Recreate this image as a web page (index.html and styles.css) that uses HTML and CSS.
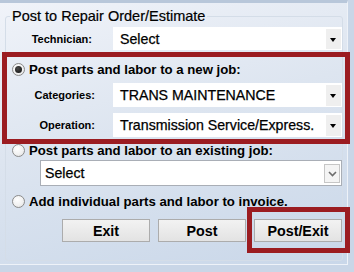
FILE: index.html
```html
<!DOCTYPE html>
<html>
<head>
<meta charset="utf-8">
<link rel="stylesheet" href="styles.css">
</head>
<body>
<div class="window">
  <fieldset class="group">
    <legend class="legend">Post to Repair Order/Estimate</legend>
    <div class="row tech-row">
      <span class="lbl tech-lbl">Technician:</span>
      <div class="combo flat"><span class="val">Select</span><span class="arrow"></span></div>
    </div>
    <div class="hl-box">
      <label class="radio r1"><span class="dot checked"></span><span class="rtext">Post parts and labor to a new job:</span></label>
      <div class="row cat-row">
        <span class="lbl sub-lbl">Categories:</span>
        <div class="combo flat sub"><span class="val">TRANS MAINTENANCE</span><span class="arrow"></span></div>
      </div>
      <div class="row op-row">
        <span class="lbl sub-lbl">Operation:</span>
        <div class="combo flat sub"><span class="val">Transmission Service/Express.</span><span class="arrow"></span></div>
      </div>
    </div>
    <label class="radio r2"><span class="dot"></span><span class="rtext">Post parts and labor to an existing job:</span></label>
    <div class="combo bordered"><span class="val">Select</span><span class="chev"><svg width="9" height="6" viewBox="0 0 9 6"><path d="M1 1 L4.5 4.5 L8 1" fill="none" stroke="#6d6d6d" stroke-width="1.6"/></svg></span></div>
    <label class="radio r3"><span class="dot"></span><span class="rtext">Add individual parts and labor to invoice.</span></label>
    <div class="buttons">
      <button class="btn">Exit</button>
      <button class="btn">Post</button>
      <span class="hl-btn"><button class="btn">Post/Exit</button></span>
    </div>
  </fieldset>
</div>
</body>
</html>
```
FILE: styles.css
```css
html, body {
  margin: 0;
  padding: 0;
}
body {
  width: 354px;
  height: 272px;
  overflow: hidden;
  background: #c9d6e7;
  font-family: "Liberation Sans", Arial, sans-serif;
  color: #000;
}
.window {
  box-sizing: border-box;
  width: 348px;
  height: 265px;
  border-top: 3px solid #b8c7da;
  border-right: 1px solid #eef2f8;
  border-bottom: 1px solid #eef2f8;
  background: linear-gradient(165deg, #f0f3f9 0%, #dde5f0 45%, #c9d7e9 100%);
  padding: 5px 0 0 5px;
}
.group {
  box-sizing: border-box;
  margin: 0;
  padding: 0;
  width: 338px;
  height: 253px;
  border: 1px solid #d4dde8;
  border-radius: 3px;
  min-width: 0;
}
.legend {
  font-size: 14.5px;
  line-height: 17px;
  padding: 0 2px;
  margin-left: 4px;
  -webkit-text-stroke: 0.2px #000;
}
.row {
  display: flex;
  align-items: center;
}
.lbl {
  font-size: 11px;
  font-weight: bold;
  text-align: right;
}
.tech-row {
  margin-top: 2px;
}
.tech-lbl {
  width: 86px;
  margin-right: 21px;
}
.sub-lbl {
  width: 88px;
  margin-right: 18px;
}
.combo {
  position: relative;
  box-sizing: border-box;
  background: #fff;
  font-size: 14.2px;
  -webkit-text-stroke: 0.25px #000;
  display: flex;
  align-items: center;
}
.combo.flat {
  flex: 1;
  height: 23px;
  padding-left: 7px;
}
.combo.flat.sub {
  height: 24px;
}
.arrow {
  position: absolute;
  right: 1px;
  top: 2px;
  bottom: 1px;
  width: 15px;
  background: #efefef;
}
.arrow::after {
  content: "";
  position: absolute;
  left: 4px;
  top: 9px;
  border-left: 3.5px solid transparent;
  border-right: 3.5px solid transparent;
  border-top: 4px solid #000;
}
.hl-box {
  margin: 2px -8px 0 -4px;
  border: 5px solid #9b1c21;
  padding: 5px 3px 2px 0;
}
.radio {
  display: flex;
  align-items: center;
  height: 14px;
  font-size: 13.2px;
  font-weight: bold;
}
.dot {
  box-sizing: border-box;
  width: 13px;
  height: 13px;
  border-radius: 50%;
  border: 1px solid #8b8b8b;
  background: radial-gradient(circle at 40% 35%, #ffffff 0%, #f1f1f1 55%, #dcdcdc 100%);
  margin-right: 4px;
  position: relative;
  flex: none;
}
.dot.checked::after {
  content: "";
  position: absolute;
  left: 2px;
  top: 2px;
  width: 7px;
  height: 7px;
  border-radius: 50%;
  background: radial-gradient(circle at 40% 35%, #4a4a4a, #0e0e0e);
}
.r1 {
  margin-left: 5px;
}
.cat-row {
  margin-top: 7px;
}
.op-row {
  margin-top: 6px;
}
.r2 {
  margin-top: -1px;
  margin-left: 6px;
}
.combo.bordered {
  margin: 3px 0 0 34px;
  height: 26px;
  border: 1px solid #a9aeb6;
  padding-left: 4px;
}
.chev {
  position: absolute;
  right: 1px;
  top: 3px;
  bottom: 2px;
  width: 16px;
  box-sizing: border-box;
  border: 1px solid #c6c6c6;
  background: #f4f4f4;
  display: flex;
  align-items: center;
  justify-content: center;
}
.r3 {
  margin-top: 8px;
  margin-left: 6px;
}
.buttons {
  display: flex;
  gap: 8px;
  margin-top: 11px;
  padding-left: 56px;
}
.btn {
  box-sizing: border-box;
  width: 88px;
  height: 23px;
  border: 1px solid #acacac;
  background: linear-gradient(#f2f2f2, #e3e3e3);
  font-family: "Liberation Sans", Arial, sans-serif;
  font-size: 14.3px;
  font-weight: bold;
  color: #000;
  padding: 0;
}
.hl-btn {
  position: relative;
  display: block;
}
.hl-btn::after {
  content: "";
  position: absolute;
  top: -12px;
  bottom: -11px;
  left: -7px;
  right: -8px;
  border: 5px solid #9b1c21;
  pointer-events: none;
}
```
